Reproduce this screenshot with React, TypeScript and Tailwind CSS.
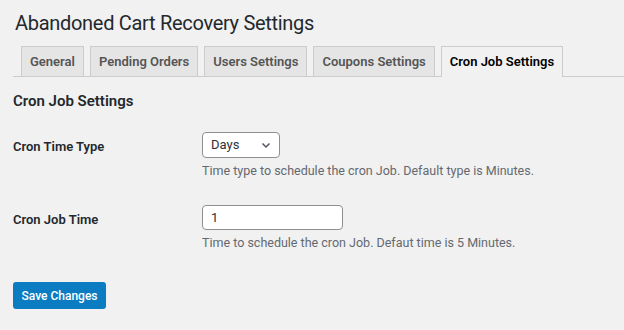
import React from 'react';

const tabs = ['General', 'Pending Orders', 'Users Settings', 'Coupons Settings', 'Cron Job Settings'];

export default function App() {
  const active = 'Cron Job Settings';

  return (
    <div className="min-h-[330px] w-full bg-[#f1f1f1] pl-[13px] text-[#23282d] [font-family:Roboto,'Liberation_Sans',sans-serif]">
      <h1 className="pl-[2px] pt-[11px] text-[20px] leading-[24px] font-normal tracking-[-0.3px] text-[#23282d]">
        Abandoned Cart Recovery Settings
      </h1>

      {/* Tabs */}
      <nav className="mt-[11px] flex items-end gap-[6px] border-b border-[#cccccc] pl-[8px]">
        {tabs.map((tab) => (
          <div
            key={tab}
            className={
              tab === active
                ? '-mb-px flex h-[31px] items-center border border-b-0 border-[#cccccc] bg-[#f1f1f1] px-[8px] text-[13px] font-semibold text-black'
                : 'flex h-[30px] items-center border border-b-0 border-[#cccccc] bg-[#e5e5e5] px-[8px] text-[13px] font-semibold text-[#555555]'
            }
          >
            {tab}
          </div>
        ))}
      </nav>

      <h2 className="pt-[15px] text-[15px] leading-[18px] font-semibold text-[#23282d]">Cron Job Settings</h2>

      {/* Form */}
      <div className="mt-[22px] flex flex-col gap-[26px]">
        <div className="flex">
          <div className="w-[189px] pt-[5px] text-[13px] font-semibold text-[#23282d]">Cron Time Type</div>
          <div className="flex flex-col">
            <div className="flex h-[26px] w-[78px] items-center justify-between rounded-[4px] border border-[#8c8f94] bg-white pl-[8px] pr-[8px] text-[13px] text-[#2c3338]">
              <span>Days</span>
              <svg width="10" height="10" viewBox="0 0 10 10" fill="none" stroke="#50575e" strokeWidth="1.5">
                <path d="M1.5 3.5 5 7 8.5 3.5" />
              </svg>
            </div>
            <p className="mt-[5px] text-[12.5px] leading-[16px] text-[#646970]">
              Time type to schedule the cron Job. Default type is Minutes.
            </p>
          </div>
        </div>

        <div className="flex">
          <div className="w-[189px] pt-[5px] text-[13px] font-semibold text-[#23282d]">Cron Job Time</div>
          <div className="flex flex-col">
            <div className="flex h-[25px] w-[141px] items-center rounded-[4px] border border-[#8c8f94] bg-white px-[8px] text-[13px] text-[#2c3338]">
              1
            </div>
            <p className="mt-[5px] text-[12.5px] leading-[16px] text-[#646970]">
              Time to schedule the cron Job. Defaut time is 5 Minutes.
            </p>
          </div>
        </div>
      </div>

      <button className="mt-[31px] h-[27px] w-[93px] rounded-[3px] bg-[#0b7cc1] text-[12px] font-medium text-white">
        Save Changes
      </button>
    </div>
  );
}
